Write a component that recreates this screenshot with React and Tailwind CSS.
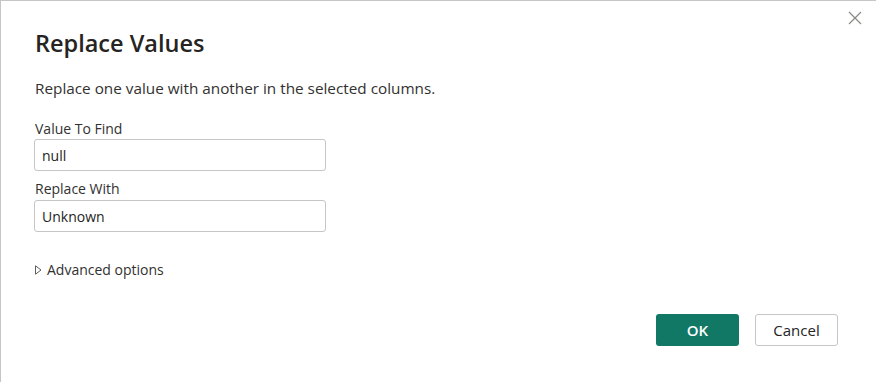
import React from 'react'

export default function App() {
  return (
    <div
      className="w-[876px] h-[382px] bg-white border-t border-l border-[#c6c6c6] relative text-[#252423]"
      style={{ fontFamily: '"Open Sans", "Noto Sans", sans-serif' }}
    >
      <button className="absolute right-[12px] top-[8px] w-[18px] h-[18px] flex items-center justify-center text-[#8a8886]">
        <svg width="16" height="16" viewBox="0 0 16 16" fill="none" stroke="currentColor" strokeWidth="1.2">
          <path d="M2 2 L14 14 M14 2 L2 14" />
        </svg>
      </button>

      <div className="pl-[33px] pt-[26px] flex flex-col">
        <h1 className="pl-[1px] text-[23.5px] leading-[32px] font-semibold text-[#252423]">Replace Values</h1>
        <p className="pl-[1px] mt-[19px] text-[15.3px] leading-[20px] text-[#323130]">
          Replace one value with another in the selected columns.
        </p>

        <label className="pl-[1px] mt-[21px] text-[14px] leading-[20px] text-[#323130]">Value To Find</label>
        <div className="w-[292px] h-[32px] border border-[#c8c6c4] rounded-[3px] px-[7px] flex items-center text-[14px] text-[#252423]">
          null
        </div>

        <label className="pl-[1px] mt-[8px] text-[14px] leading-[20px] text-[#323130]">Replace With</label>
        <div className="mt-[1px] w-[292px] h-[32px] border border-[#c8c6c4] rounded-[3px] px-[7px] flex items-center text-[14px] text-[#252423]">
          Unknown
        </div>

        <div className="pl-[1px] mt-[28px] flex items-center gap-[5px] text-[14px] leading-[20px] text-[#323130]">
          <svg width="7" height="10" viewBox="0 0 7 10" fill="none" stroke="#605e5c" strokeWidth="1">
            <path d="M0.5 0.8 L6 5 L0.5 9.2 Z" />
          </svg>
          <span>Advanced options</span>
        </div>
      </div>

      <div className="absolute right-[38px] top-[313px] flex gap-[16px]">
        <button className="w-[83px] h-[32px] rounded-[3px] bg-[#117865] text-white text-[15px] font-semibold">
          OK
        </button>
        <button className="w-[83px] h-[32px] rounded-[3px] bg-white border border-[#c8c6c4] text-[#252423] text-[15px]">
          Cancel
        </button>
      </div>
    </div>
  )
}
